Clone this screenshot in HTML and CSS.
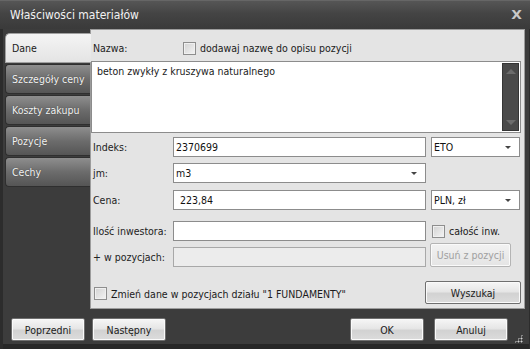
FILE: index.html
```html
<!DOCTYPE html>
<html lang="pl">
<head>
<meta charset="utf-8">
<title>Właściwości materiałów</title>
<link rel="stylesheet" href="styles.css">
</head>
<body>
<div class="window">
  <div class="titlebar">
    <span class="title">Właściwości materiałów</span>
    <span class="close">X</span>
  </div>
  <div class="main">
    <div class="tabs">
      <div class="tab active">Dane</div>
      <div class="tab">Szczegóły ceny</div>
      <div class="tab">Koszty zakupu</div>
      <div class="tab">Pozycje</div>
      <div class="tab">Cechy</div>
    </div>
    <div class="panel">
      <div class="row row-name">
        <span class="label">Nazwa:</span>
        <label class="check"><span class="box"></span>dodawaj nazwę do opisu pozycji</label>
      </div>
      <div class="textarea">
        <span class="ta-text">beton zwykły z kruszywa naturalnego</span>
        <div class="scrollbar"><span class="up"></span><span class="down"></span></div>
      </div>
      <div class="row r-indeks">
        <span class="label">Indeks:</span>
        <div class="input">2370699</div>
        <div class="input select">ETO<span class="arrow"></span></div>
      </div>
      <div class="row r-jm">
        <span class="label">jm:</span>
        <div class="input select">m3<span class="arrow"></span></div>
      </div>
      <div class="row r-cena">
        <span class="label">Cena:</span>
        <div class="input cena">223,84</div>
        <div class="input select">PLN, zł<span class="arrow"></span></div>
      </div>
      <div class="row r-ilosc">
        <span class="label">Ilość inwestora:</span>
        <div class="input"></div>
        <label class="check"><span class="box"></span>całość inw.</label>
      </div>
      <div class="row r-wpoz">
        <span class="label">+ w pozycjach:</span>
        <div class="input disabled"></div>
        <button class="btn btn-usun" disabled>Usuń z pozycji</button>
      </div>
      <div class="row r-zmien">
        <label class="check"><span class="box"></span>Zmień dane w pozycjach działu "1 FUNDAMENTY"</label>
        <button class="btn btn-wyszukaj">Wyszukaj</button>
      </div>
    </div>
  </div>
  <div class="footer">
    <button class="btn fbtn">Poprzedni</button>
    <button class="btn fbtn next">Następny</button>
    <span class="spacer"></span>
    <button class="btn fbtn">OK</button>
    <button class="btn fbtn cancel">Anuluj</button>
    <span class="grip"></span>
  </div>
</div>
</body>
</html>
```
FILE: styles.css
```css
* { box-sizing: border-box; }
html, body { margin: 0; padding: 0; }
body {
  width: 530px; height: 349px; overflow: hidden;
  background: #3b3b3b;
  font-family: "DejaVu Sans Condensed", "Liberation Sans", Arial, sans-serif;
  font-size: 10.5px;
  color: #1b1b1b;
}
.window {
  position: relative;
  width: 530px; height: 349px;
  display: flex; flex-direction: column;
  background: #3c3c3c;
  box-shadow: inset 3px 0 0 #2c2c2c, inset -1px 0 0 #2c2c2c, inset 0 -5px 0 #272727;
}
.titlebar {
  height: 29px;
  display: flex; align-items: center; justify-content: space-between;
  padding: 0 9px 1px 10px;
  background: linear-gradient(#565656, #444 45%, #3a3a3a);
  border-top: 1px solid #666;
  color: #f2f2f2;
  font-size: 12px;
}
.close { font-family: "DejaVu Sans", sans-serif; font-weight: bold; color: #c8c8c8; font-size: 12px; transform: scaleX(1.15); }
.main { display: flex; height: 280px; }
.tabs {
  width: 85px; margin-left: 5px; padding-top: 4px;
  display: flex; flex-direction: column; gap: 1px;
}
.tab {
  height: 30px;
  display: flex; align-items: center;
  padding-left: 6px;
  white-space: nowrap;
  color: #f4f4f4;
  background: linear-gradient(#8e8e8e, #6c6c6c 50%, #555);
  border: 1px solid #2f2f2f;
  border-right: none;
  border-radius: 4px 0 0 4px;
  text-shadow: 0 0 1px #333;
}
.tab.active {
  position: relative; z-index: 1;
  width: 86px;
  color: #1b1b1b; text-shadow: none;
  background: linear-gradient(#f4f4f4, #e4e4e4);
  border: 1px solid #a0a0a0; border-right: none;
  border-radius: 5px 0 0 0;
}
.panel {
  width: 435px; height: 280px;
  background: #e4e4e4;
  border: 1px solid #9c9c9c;
  display: flex; flex-direction: column;
}
.row {
  display: grid;
  grid-template-columns: 75px 253px 89px;
  column-gap: 5px;
  align-items: center;
  padding-left: 2px;
  height: 20px;
}
.row-name { margin-top: 10px; height: 16px; }
.row-name .check { margin-left: 10px; }
.label { white-space: nowrap; color: #222; }
.check { display: flex; align-items: center; white-space: nowrap; color: #1b1b1b; }
.box {
  width: 13px; height: 13px; flex: none;
  margin-right: 4px;
  border: 1px solid #8e8e8e;
  background: linear-gradient(135deg, #d2d2d2, #f4f4f4);
  box-shadow: inset 0 0 0 1px #f0f0f0;
}
.textarea {
  position: relative;
  margin-top: 5px;
  width: 430px; height: 72px;
  background: #fff;
  border: 1px solid #8c8c8c;
  padding: 3px 5px;
}
.scrollbar {
  position: absolute; right: 1px; top: 1px; bottom: 1px;
  width: 17px;
  background: #4a4a4a;
  border: 1px solid #353535;
}
.up, .down {
  position: absolute; left: 3px;
  width: 0; height: 0;
  border-left: 5px solid transparent; border-right: 5px solid transparent;
}
.up { top: 5px; border-bottom: 5px solid #6c6c6c; }
.down { bottom: 5px; border-top: 5px solid #6c6c6c; }
.input {
  position: relative;
  height: 20px;
  background: #fff;
  border: 1px solid #8c8c8c;
  padding: 0 2px;
  display: flex; align-items: center;
  color: #111;
}
.input.cena { padding-left: 6px; }
.input.disabled { background: #ececec; border-color: #a8a8a8; }
.arrow {
  position: absolute; right: 8px; top: 8px;
  width: 0; height: 0;
  border-left: 3px solid transparent; border-right: 3px solid transparent;
  border-top: 3px solid #444;
}
.r-indeks { margin-top: 4px; }
.r-jm { margin-top: 6px; }
.r-cena { margin-top: 7px; }
.r-ilosc { margin-top: 11px; }
.r-ilosc .check { margin-left: 1px; }
.r-wpoz { margin-top: 6px; }
.btn {
  font-family: inherit; font-size: 10.5px;
  color: #1b1b1b;
  background: linear-gradient(#f6f6f6, #e6e6e6 45%, #d2d2d2 55%, #dcdcdc);
  border: 1px solid #6f6f6f;
  border-radius: 2px;
  box-shadow: inset 0 0 0 1px #fafafa;
  padding: 0;
  height: 23px;
}
.btn-usun {
  width: 81px; height: 24px; margin-left: -1px;
  margin-top: -4px;
  color: #a0a0a0; border-color: #b4b4b4;
  background: linear-gradient(#f2f2f2, #e4e4e4);
}
.r-zmien {
  margin-top: 14px;
  grid-template-columns: 325px 96px;
  column-gap: 6px;
  height: 23px;
  padding-left: 3px;
}
.r-zmien .check { margin-top: 2px; }
.btn-wyszukaj { width: 96px; }
.footer {
  height: 40px;
  display: flex; align-items: flex-start;
  padding: 9px 0 0 11px;
}
.fbtn { width: 74px; }
.fbtn.next { margin-left: 7px; }
.spacer { flex: 1; }
.fbtn.cancel { margin-left: 10px; margin-right: 22px; }
.grip {
  position: absolute; right: 7px; bottom: 6px;
  width: 9px; height: 9px;
  background:
    radial-gradient(circle, #cfcfcf 0.8px, transparent 1.2px) 0 0 / 3px 3px;
  clip-path: polygon(100% 0, 100% 100%, 0 100%);
}
```
